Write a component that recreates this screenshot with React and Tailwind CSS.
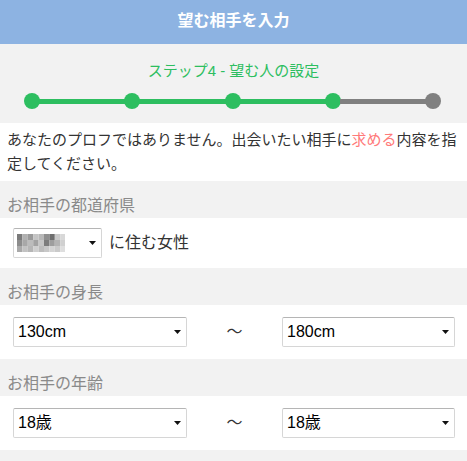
import React from "react";

const FONT = { fontFamily: '"Liberation Sans", "Noto Sans CJK JP", sans-serif' };

function Arrow() {
  return (
    <svg width="7" height="4" viewBox="0 0 7 4" className="shrink-0">
      <path d="M0 0 H7 L3.5 4 Z" fill="#111" />
    </svg>
  );
}

function FakeSelect({ children, className }) {
  return (
    <div
      className={
        "h-[30px] flex items-center justify-between bg-white border border-[#d6d6d6] border-t-[#b5b5b5] rounded-[2px] pl-[4px] pr-[5px] " +
        className
      }
    >
      <span className="text-[16px] text-black leading-none">{children}</span>
      <Arrow />
    </div>
  );
}

function Mosaic() {
  const rows = [
    ["#7a7a7a", "#b0b0b0", "#9a9a9a", "#c4c4c4", "#b8b8b8", "#8f8f8f", "#6e6e6e", "#c9c9c9", "#d8d8d8"],
    ["#8c8c8c", "#a8a8a8", "#bcbcbc", "#a3a3a3", "#c6c6c6", "#7d7d7d", "#9e9e9e", "#b4b4b4", "#d0d0d0"],
    ["#a9a9a9", "#c2c2c2", "#b6b6b6", "#cfcfcf", "#bdbdbd", "#c8c8c8", "#d4d4d4", "#cacaca", "#dedede"],
  ];
  return (
    <svg width="48" height="18" viewBox="0 0 48 18">
      {rows.map((r, y) =>
        r.map((c, x) => (
          <rect key={x + "-" + y} x={x * 5.4} y={y * 6} width="5.4" height="6" fill={c} />
        ))
      )}
    </svg>
  );
}

function Label({ children }) {
  return (
    <div className="bg-[#f2f2f2] pt-[13px] pl-[7px] text-[16px] leading-[24px] text-[#8a8a8a]">
      {children}
    </div>
  );
}

function RangeRow({ left, right }) {
  return (
    <div className="bg-white py-3 pl-[13px] pr-[12px] flex items-center">
      <FakeSelect className="w-[174px]">{left}</FakeSelect>
      <div className="flex-1 text-center text-[16px] text-[#333] leading-none">〜</div>
      <FakeSelect className="w-[173px]">{right}</FakeSelect>
    </div>
  );
}

export default function App() {
  const dots = [0, 1, 2, 3, 4];
  return (
    <div className="w-[467px] h-[461px] bg-[#f2f2f2] overflow-hidden" style={FONT}>
      <div className="h-[44px] bg-[#8db3e2] flex items-center justify-center text-white text-[16px] font-bold pb-[3px]">
        望む相手を入力
      </div>
      <div className="pt-[15px] pb-[14px]">
        <div className="text-center text-[15px] leading-[24px] text-[#2dbe60]">ステップ4 - 望む人の設定</div>
        <div className="mt-[10px] pl-6 pr-[26px] flex items-center">
          {dots.map((d) => (
            <React.Fragment key={d}>
              <div className={"w-4 h-4 rounded-full shrink-0 " + (d < 4 ? "bg-[#2dbe60]" : "bg-[#808080]")} />
              {d < 4 && (
                <div className={"flex-1 h-[5px] -mx-px " + (d < 3 ? "bg-[#2dbe60]" : "bg-[#808080]")} />
              )}
            </React.Fragment>
          ))}
        </div>
      </div>
      <div className="bg-white py-[5px] pl-[7px] pr-[4px] text-[15px] leading-[24px] text-[#333]">
        あなたのプロフではありません。出会いたい相手に<span className="text-[#ff7a7a]">求める</span>内容を指定してください。
      </div>
      <Label>お相手の都道府県</Label>
      <div className="bg-white py-[10px] pl-[13px] flex items-center">
        <div className="w-[89px] h-[30px] flex items-center justify-between bg-white border border-[#d6d6d6] border-t-[#b5b5b5] rounded-[2px] pl-[3px] pr-[5px]">
          <Mosaic />
          <Arrow />
        </div>
        <span className="ml-[7px] text-[16px] text-[#333]">に住む女性</span>
      </div>
      <Label>お相手の身長</Label>
      <RangeRow left="130cm" right="180cm" />
      <Label>お相手の年齢</Label>
      <RangeRow left="18歳" right="18歳" />
    </div>
  );
}
